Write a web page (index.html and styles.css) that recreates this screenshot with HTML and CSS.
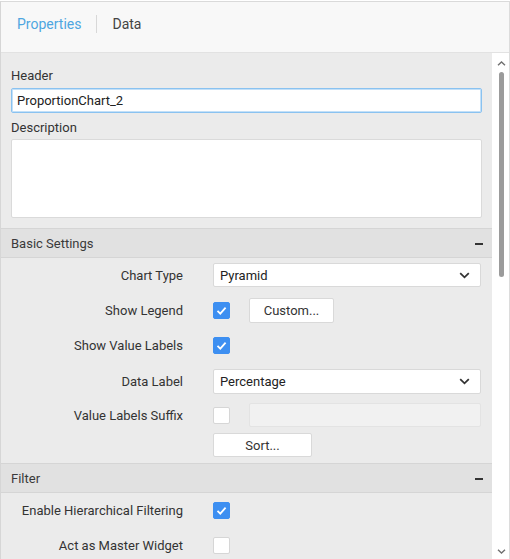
FILE: index.html
```html
<!DOCTYPE html>
<html>
<head>
<meta charset="utf-8">
<link rel="stylesheet" href="styles.css">
</head>
<body>
<div class="panel">
  <div class="tabs">
    <span class="tab active">Properties</span>
    <span class="tab-sep"></span>
    <span class="tab">Data</span>
  </div>
  <div class="body">
    <div class="content">
      <div class="general">
        <div class="field-label">Header</div>
        <div class="text-input focused">ProportionChart_2</div>
        <div class="field-label desc">Description</div>
        <div class="textarea"></div>
      </div>

      <div class="section-head"><span>Basic Settings</span><span class="minus"></span></div>
      <div class="rows">
        <div class="row r34">
          <div class="lbl">Chart Type</div>
          <div class="ctl"><div class="select"><span>Pyramid</span><svg class="chev" width="11" height="7" viewBox="0 0 11 7"><polyline points="1.2,1.2 5.5,5.3 9.8,1.2" fill="none" stroke="#333" stroke-width="1.8"/></svg></div></div>
        </div>
        <div class="row r36">
          <div class="lbl">Show Legend</div>
          <div class="ctl"><span class="check on"><svg width="17" height="17" viewBox="0 0 17 17"><polyline points="4.5,8.8 7.3,11.6 12.6,5.6" fill="none" stroke="#fff" stroke-width="1.8"/></svg></span><div class="btn custom">Custom...</div></div>
        </div>
        <div class="row r34">
          <div class="lbl">Show Value Labels</div>
          <div class="ctl"><span class="check on"><svg width="17" height="17" viewBox="0 0 17 17"><polyline points="4.5,8.8 7.3,11.6 12.6,5.6" fill="none" stroke="#fff" stroke-width="1.8"/></svg></span></div>
        </div>
        <div class="row r38">
          <div class="lbl">Data Label</div>
          <div class="ctl"><div class="select tall"><span>Percentage</span><svg class="chev" width="11" height="7" viewBox="0 0 11 7"><polyline points="1.2,1.2 5.5,5.3 9.8,1.2" fill="none" stroke="#333" stroke-width="1.8"/></svg></div></div>
        </div>
        <div class="row r30">
          <div class="lbl">Value Labels Suffix</div>
          <div class="ctl"><span class="check"></span><div class="text-input disabled"></div></div>
        </div>
        <div class="row r33 top">
          <div class="lbl"></div>
          <div class="ctl"><div class="btn sort">Sort...</div></div>
        </div>
      </div>

      <div class="section-head"><span>Filter</span><span class="minus"></span></div>
      <div class="rows">
        <div class="row r34">
          <div class="lbl">Enable Hierarchical Filtering</div>
          <div class="ctl"><span class="check on"><svg width="17" height="17" viewBox="0 0 17 17"><polyline points="4.5,8.8 7.3,11.6 12.6,5.6" fill="none" stroke="#fff" stroke-width="1.8"/></svg></span></div>
        </div>
        <div class="row r36">
          <div class="lbl">Act as Master Widget</div>
          <div class="ctl"><span class="check"></span></div>
        </div>
      </div>
    </div>
    <div class="scrollbar">
      <svg class="arrow" width="9" height="5" viewBox="0 0 9 5"><polyline points="1,4.2 4.5,1 8,4.2" fill="none" stroke="#707070" stroke-width="1.4"/></svg>
      <div class="thumb"></div>
      <svg class="arrow down" width="9" height="5" viewBox="0 0 9 5"><polyline points="1,0.8 4.5,4 8,0.8" fill="none" stroke="#707070" stroke-width="1.4"/></svg>
    </div>
  </div>
</div>
</body>
</html>
```

FILE: styles.css
```css
* { box-sizing: border-box; }

html, body {
  margin: 0;
  padding: 0;
  background: #ffffff;
  overflow: hidden;
}

body {
  width: 510px;
  height: 559px;
  font-family: Roboto, "Liberation Sans", sans-serif;
  font-size: 13px;
  line-height: 16px;
  color: #333333;
}

.panel {
  margin-top: 1px;
  width: 510px;
  height: 558px;
  border-top: 1px solid #dadada;
  border-left: 1px solid #d6d6d6;
  border-right: 1px solid #dcdcdc;
  display: flex;
  flex-direction: column;
  overflow: hidden;
}

/* tabs */
.tabs {
  height: 51px;
  flex: none;
  background: #f8f8f8;
  border-bottom: 1px solid #e2e2e2;
  display: flex;
  align-items: flex-start;
  padding: 13px 0 0 16px;
  font-size: 14px;
  line-height: 18px;
}

.tab { color: #444444; }
.tab.active { color: #4ea6e0; }

.tab-sep {
  width: 1px;
  height: 18px;
  margin: 0 15px 0 15px;
  background: #d8d8d8;
}

/* body */
.body {
  flex: 1;
  display: flex;
  min-height: 0;
}

.content {
  flex: 1;
  background: #ebebeb;
  overflow: hidden;
}

.general {
  padding: 15px 10px 10px 10px;
}

.field-label { height: 16px; }
.field-label.desc { margin-top: 7px; }

.text-input {
  margin-top: 4px;
  height: 25px;
  background: #ffffff;
  border: 1px solid #d9d9d9;
  border-radius: 2px;
  padding: 3px 5px;
  line-height: 17px;
  color: #222222;
}

.text-input.focused {
  border-color: #8ac2f0;
  box-shadow: inset 0 0 0 1px #c3e0f8;
}

.textarea {
  margin-top: 3px;
  height: 79px;
  background: #ffffff;
  border: 1px solid #dadada;
  border-radius: 2px;
}

/* section headers */
.section-head {
  height: 30px;
  background: #e1e1e1;
  border-top: 1px solid #d5d5d5;
  border-bottom: 1px solid #d5d5d5;
  display: flex;
  align-items: center;
  justify-content: space-between;
  padding: 1px 9px 0 10px;
  color: #3a3a3a;
}

.minus {
  width: 8px;
  height: 2px;
  background: #333333;
}

/* rows */
.row {
  display: grid;
  grid-template-columns: 172px 268px;
  column-gap: 30px;
  align-items: center;
  padding-left: 10px;
}

.r30 { height: 30px; }
.r33 { height: 33px; }
.r34 { height: 34px; }
.r36 { height: 36px; }
.r38 { height: 38px; }

.row.top { align-items: start; padding-top: 3px; }

.lbl {
  text-align: right;
  color: #333333;
  padding-top: 2px;
}

.ctl {
  display: flex;
  align-items: center;
  gap: 19px;
}

.select {
  flex: 1;
  height: 24px;
  background: #ffffff;
  border: 1px solid #d9d9d9;
  border-radius: 2px;
  display: flex;
  align-items: center;
  justify-content: space-between;
  padding: 1px 10px 0 6px;
  color: #222222;
}

.select.tall { height: 25px; }

.chev { display: block; }

.check {
  flex: none;
  width: 17px;
  height: 17px;
  border-radius: 2px;
  background: #ffffff;
  border: 1px solid #d6d6d6;
  display: block;
}

.check.on {
  background: #3d8ff1;
  border-color: #3d8ff1;
}

.check svg {
  display: block;
  margin: -1px 0 0 -1px;
}

.btn {
  height: 25px;
  background: #ffffff;
  border: 1px solid #d9d9d9;
  border-radius: 2px;
  display: flex;
  align-items: center;
  justify-content: center;
  padding-top: 1px;
  color: #333333;
}

.btn.custom { width: 85px; }
.btn.sort { width: 99px; height: 24px; }

.text-input.disabled {
  flex: 1;
  margin-top: 0;
  height: 24px;
  background: #f1f1f1;
  border-color: #e3e3e3;
}

/* scrollbar */
.scrollbar {
  width: 17px;
  flex: none;
  background: #ffffff;
  display: flex;
  flex-direction: column;
  align-items: center;
  padding: 8px 0 5px 1px;
}

.arrow { display: block; flex: none; }

.thumb {
  margin-top: 6px;
  width: 5px;
  height: 205px;
  border-radius: 3px;
  background: #9b9b9b;
}

.arrow.down { margin-top: auto; }
```
